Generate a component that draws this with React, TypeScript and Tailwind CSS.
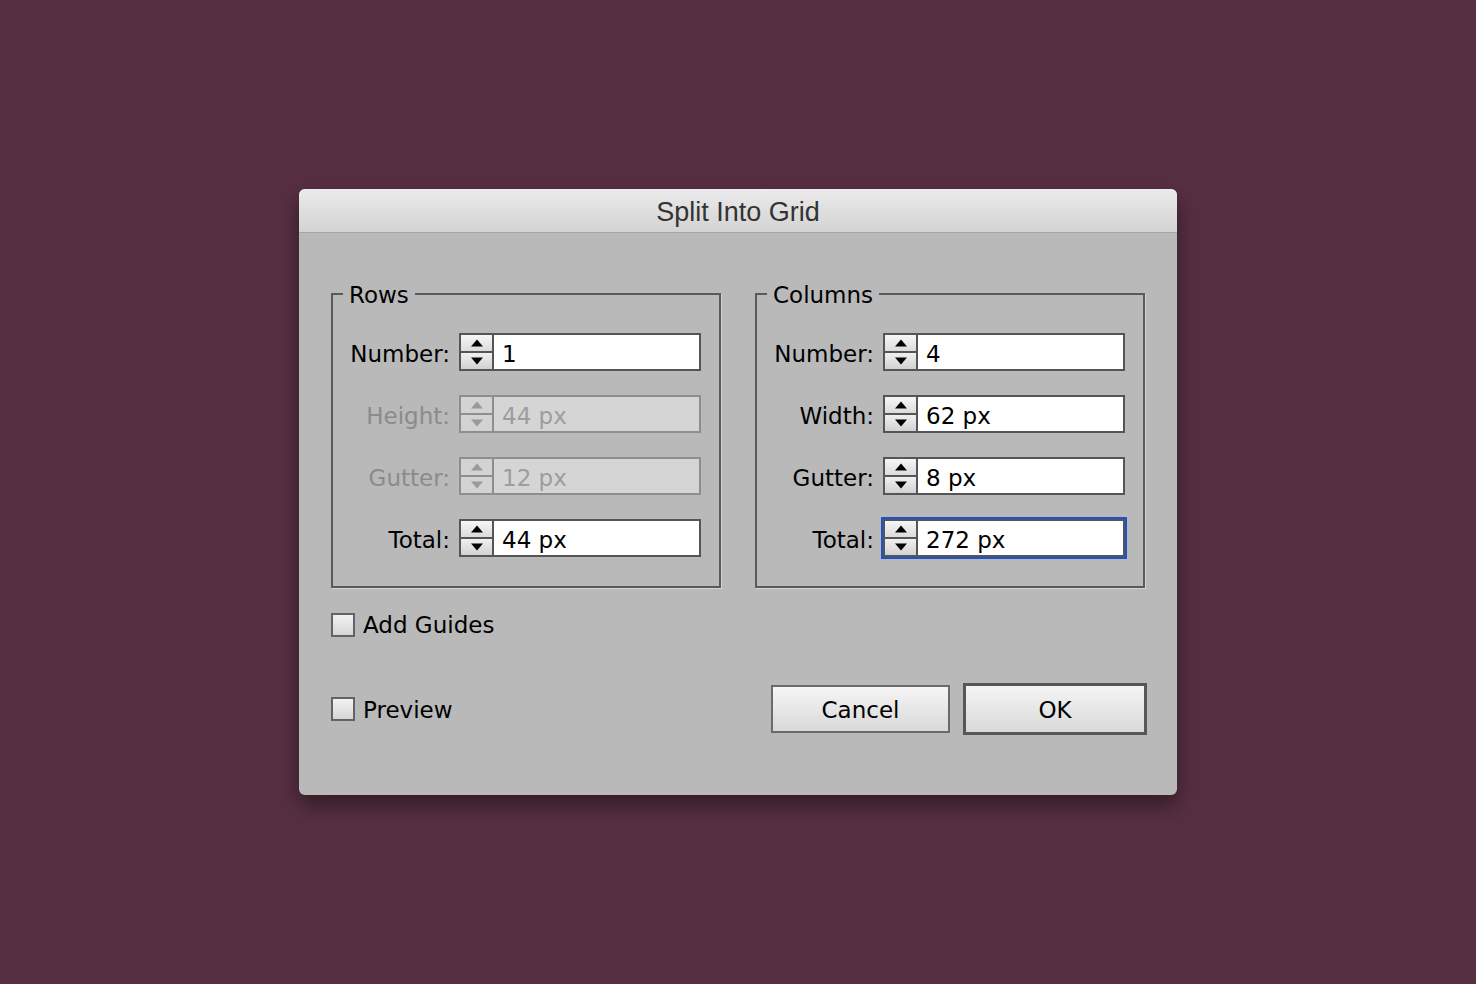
import React from "react";

const FONT = { fontFamily: '"DejaVu Sans", "Liberation Sans", sans-serif' };

function Arrow({ up, disabled }: { up: boolean; disabled?: boolean }) {
  return (
    <svg width="12" height="8" viewBox="0 0 12 8">
      <polygon
        points={up ? "6,0.5 12,7.5 0,7.5" : "0,0.5 12,0.5 6,7.5"}
        fill={disabled ? "#9a9a9a" : "#000"}
      />
    </svg>
  );
}

function Field({
  label,
  value,
  disabled,
  focused,
}: {
  label: string;
  value: string;
  disabled?: boolean;
  focused?: boolean;
}) {
  return (
    <div className="flex items-center h-[38px]">
      <div
        className={
          "w-[117px] pt-[5px] text-right text-[23px] leading-none " +
          (disabled ? "text-[#8b8b8b]" : "text-black")
        }
      >
        {label}
      </div>
      <div
        className={
          "ml-[9px] flex h-[38px] w-[242px] border-2 " +
          (disabled ? "border-[#8e8e8e] " : "border-[#555555] ") +
          (focused ? "ring-2 ring-[#1d52c9]" : "")
        }
      >
        <div
          className={
            "flex w-[33px] flex-col border-r-2 " +
            (disabled ? "border-[#8e8e8e]" : "border-[#555555]")
          }
        >
          <div
            className={
              "flex flex-1 items-center justify-center border-b-2 " +
              (disabled
                ? "border-[#8e8e8e] bg-[#d3d3d3]"
                : "border-[#555555] bg-gradient-to-b from-[#f6f6f6] to-[#dcdcdc]")
            }
          >
            <Arrow up disabled={disabled} />
          </div>
          <div
            className={
              "flex flex-1 items-center justify-center " +
              (disabled ? "bg-[#d3d3d3]" : "bg-gradient-to-b from-[#f0f0f0] to-[#d2d2d2]")
            }
          >
            <Arrow up={false} disabled={disabled} />
          </div>
        </div>
        <div
          className={
            "flex flex-1 items-center pl-[8px] pt-[5px] text-[23px] leading-none " +
            (disabled ? "bg-[#d5d5d5] text-[#9d9d9d]" : "bg-white text-black")
          }
        >
          {value}
        </div>
      </div>
    </div>
  );
}

function Group({
  title,
  rows,
}: {
  title: string;
  rows: { label: string; value: string; disabled?: boolean; focused?: boolean }[];
}) {
  return (
    <fieldset className="w-[390px] border-2 border-[#5a5a5a] shadow-[1px_1px_0_#d4d4d4] pb-[29px] pt-[26px]">
      <legend className="relative top-[2px] ml-[10px] px-[6px] text-[23px] leading-[27px] text-black">
        {title}
      </legend>
      <div className="flex flex-col gap-[24px]">
        {rows.map((r) => (
          <Field key={r.label} {...r} />
        ))}
      </div>
    </fieldset>
  );
}

function Checkbox({ label }: { label: string }) {
  return (
    <div className="flex items-center gap-[8px]">
      <div className="h-[24px] w-[24px] border-2 border-[#636363] bg-gradient-to-b from-[#f2f2f2] to-[#d6d6d6]" />
      <span className="pt-[2px] text-[23px] leading-none text-black">{label}</span>
    </div>
  );
}

export default function App() {
  return (
    <div
      className="flex h-[984px] w-[1476px] items-center justify-center bg-[#572f43]"
      style={FONT}
    >
      <div className="flex h-[606px] w-[878px] flex-col overflow-hidden rounded-[6px] bg-[#b9b9b9] shadow-[0_10px_22px_rgba(0,0,0,0.45)]">
        <div className="flex h-[44px] items-center justify-center border-b border-[#a5a5a5] bg-gradient-to-b from-[#ebebeb] to-[#d3d3d3]">
          <span
            className="pt-[4px] text-[27px] leading-none text-[#333333]"
            style={{ fontFamily: '"Liberation Sans", Arial, sans-serif' }}
          >
            Split Into Grid
          </span>
        </div>
        <div className="flex flex-col px-[32px] pt-[47px]">
          <div className="flex gap-[34px]">
            <Group
              title="Rows"
              rows={[
                { label: "Number:", value: "1" },
                { label: "Height:", value: "44 px", disabled: true },
                { label: "Gutter:", value: "12 px", disabled: true },
                { label: "Total:", value: "44 px" },
              ]}
            />
            <Group
              title="Columns"
              rows={[
                { label: "Number:", value: "4" },
                { label: "Width:", value: "62 px" },
                { label: "Gutter:", value: "8 px" },
                { label: "Total:", value: "272 px", focused: true },
              ]}
            />
          </div>
          <div className="mt-[24px]">
            <Checkbox label="Add Guides" />
          </div>
          <div className="mr-[-2px] mt-[46px] flex items-center justify-between">
            <Checkbox label="Preview" />
            <div className="flex items-center gap-[13px]">
              <button className="flex h-[48px] w-[179px] items-center justify-center border-2 border-[#6a6a6a] bg-gradient-to-b from-[#f5f5f5] to-[#d9d9d9] pt-[3px] text-[23px] leading-none text-black">
                Cancel
              </button>
              <button className="flex h-[52px] w-[184px] items-center justify-center border-[3px] border-[#575757] bg-gradient-to-b from-[#f5f5f5] to-[#d9d9d9] pt-[3px] text-[23px] leading-none text-black">
                OK
              </button>
            </div>
          </div>
        </div>
      </div>
    </div>
  );
}
